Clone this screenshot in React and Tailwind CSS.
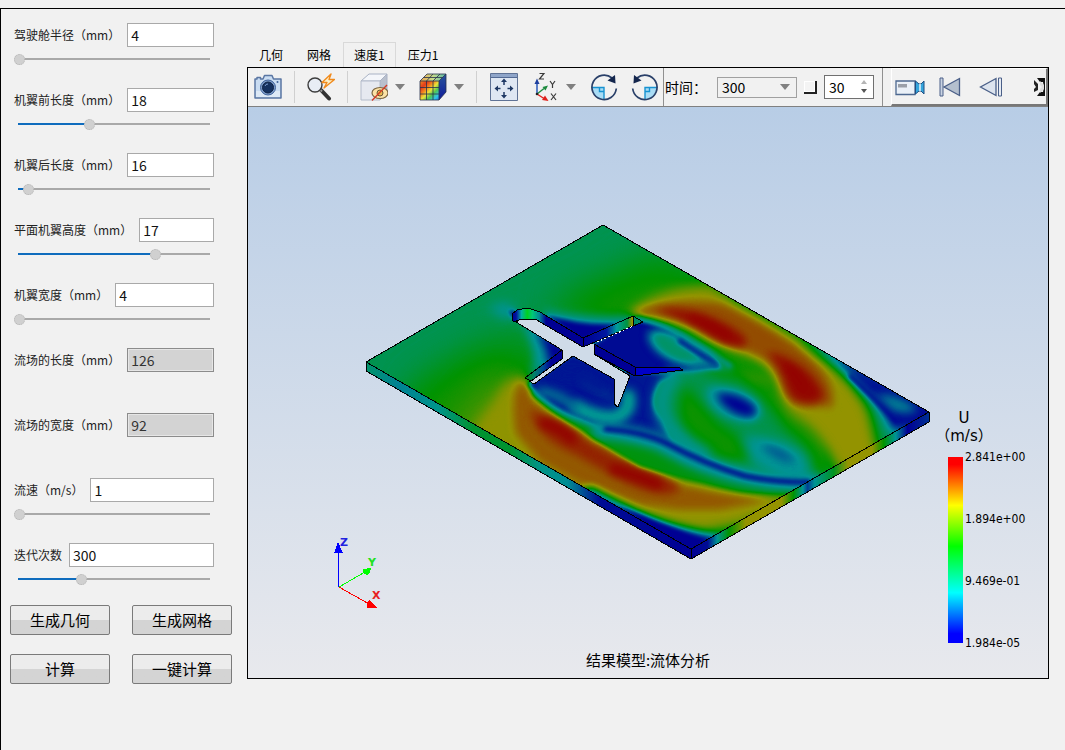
import React, { useState } from 'react'

const PARAMS = [
  { id: 'cockpit', label: '驾驶舱半径（mm）', value: '4', pos: 0 },
  { id: 'front', label: '机翼前长度（mm）', value: '18', pos: 37 },
  { id: 'rear', label: '机翼后长度（mm）', value: '16', pos: 5 },
  { id: 'height', label: '平面机翼高度（mm）', value: '17', pos: 72 },
  { id: 'width', label: '机翼宽度（mm）', value: '4', pos: 0 },
  { id: 'fieldLen', label: '流场的长度（mm）', value: '126', readOnly: true },
  { id: 'fieldWid', label: '流场的宽度（mm）', value: '92', readOnly: true },
  { id: 'speed', label: '流速（m/s）', value: '1', pos: 0 },
  { id: 'iter', label: '迭代次数', value: '300', pos: 33 },
]

const ACTIONS = ['生成几何', '生成网格', '计算', '一键计算']
const TABS = ['几何', '网格', '速度1', '压力1']
const LEGEND = ['2.841e+00', '1.894e+00', '9.469e-01', '1.984e-05']

const ParamRow = ({ param }) => {
  const [pos, setPos] = useState(param.pos || 0)
  return (
    <div className="h-11">
      <div className="flex items-center gap-[7px]">
        <label htmlFor={param.id} className="shrink-0 text-[12px] leading-6 text-[#222]">{param.label}</label>
        <input
          id={param.id}
          defaultValue={param.value}
          readOnly={param.readOnly}
          className="h-6 w-0 min-w-0 flex-1 border border-[#a9a9a9] bg-white px-[3px] text-[14px] leading-5 text-[#111] outline-none read-only:border-[#8c8c8c] read-only:bg-[#d3d3d3] read-only:text-[#333] read-only:inset-ring read-only:inset-ring-[#e6e6e6]"
        />
      </div>
      {param.readOnly ? null : (
        <div className="relative mt-1 h-4">
          <div className="absolute top-[7px] right-1 left-1 h-0.5 bg-[#a9a9a9]">
            <div className="h-full bg-[#0f6cbd]" style={{ width: `${pos}%` }} />
          </div>
          <input
            type="range"
            aria-label={param.label}
            value={pos}
            onChange={(e) => setPos(Number(e.target.value))}
            className="relative block h-4 w-full appearance-none bg-transparent outline-none [&::-webkit-slider-thumb]:size-[11px] [&::-webkit-slider-thumb]:appearance-none [&::-webkit-slider-thumb]:rounded-full [&::-webkit-slider-thumb]:border [&::-webkit-slider-thumb]:border-dotted [&::-webkit-slider-thumb]:border-[#b4b4b4] [&::-webkit-slider-thumb]:bg-[#d0d0d0]"
          />
        </div>
      )}
    </div>
  )
}

const Sep = () => <div className="h-8 w-px shrink-0 bg-[#d0d0d0]" />

const Caret = () => (
  <svg viewBox="0 0 10 6" className="h-1.5 w-2.5 shrink-0"><path d="M0 0H10L5 6Z" fill="#808080" /></svg>
)

const ToolButton = ({ label, children }) => (
  <button type="button" aria-label={label} className="size-7 shrink-0">
    <svg viewBox="0 0 28 28" className="size-7">{children}</svg>
  </button>
)

const CameraIcon = () => (
  <ToolButton label="截图">
    <path d="M1 6H3V4.500H6.500V6H9L10.500 2.500H18L19.500 6H27V25H1Z" fill="#c9dcf2" stroke="#5a76a3" strokeWidth="1.500" strokeLinejoin="round" />
    <path d="M2 18H26V24H2Z" fill="#e6eef8" opacity="0.700" />
    <circle cx="14" cy="14.500" r="7.500" fill="#7f9ecb" stroke="#3f6199" />
    <circle cx="14" cy="14.500" r="5.500" fill="#14305f" stroke="#0f2346" />
    <path d="M11 13a3 3 0 0 1 3-2" stroke="#7fa1d4" fill="none" />
    <circle cx="23.500" cy="9" r="1" fill="#3f6199" />
  </ToolButton>
)

const ZoomIcon = () => (
  <ToolButton label="缩放">
    <path d="M14 17L22 25.500" stroke="#333" strokeWidth="4" strokeLinecap="round" />
    <path d="M12.500 16L15 18.500" stroke="#999" strokeWidth="2" />
    <circle cx="8" cy="12" r="7" fill="#e8edf5" stroke="#3d3d3d" strokeWidth="1.400" />
    <path d="M24 1L15 9.500L20 9.500L17 15L27.500 6.500L22 6.500Z" fill="#fdf0c8" stroke="#f08a1d" strokeWidth="1.400" strokeLinejoin="round" />
  </ToolButton>
)

const HideCubeIcon = () => (
  <ToolButton label="隐藏">
    <path d="M1 8L9 1H27L20 8Z" fill="#f4f6fa" stroke="#a9b2c4" />
    <path d="M20 8L27 1V19L20 27Z" fill="#b9c0cd" stroke="#a9b2c4" />
    <path d="M1 8H20V27H1Z" fill="#e6e9f0" stroke="#b4bccb" />
    <ellipse cx="20" cy="20" rx="8" ry="5.500" fill="#fbe2a6" stroke="#7d6640" strokeWidth="1.200" />
    <circle cx="20" cy="20" r="3" fill="#e9b84f" stroke="#6b5636" />
    <path d="M12 27.500L27 12" stroke="#d33a24" strokeWidth="1.400" />
  </ToolButton>
)

const RainbowCubeIcon = () => (
  <ToolButton label="云图">
    <defs>
      <linearGradient id="cubeFront" x1="0" y1="0" x2="1" y2="1">
        <stop offset="0" stopColor="#f58a1e" /><stop offset="0.220" stopColor="#e23b1c" /><stop offset="0.380" stopColor="#f58a1e" />
        <stop offset="0.520" stopColor="#e9e33a" /><stop offset="0.680" stopColor="#4fc653" />
        <stop offset="0.850" stopColor="#2fc4e8" /><stop offset="1" stopColor="#1c7de8" />
      </linearGradient>
      <linearGradient id="cubeTop" x1="0" x2="1">
        <stop offset="0" stopColor="#f0a24a" /><stop offset="0.500" stopColor="#c6dc8a" /><stop offset="1" stopColor="#55b5a8" />
      </linearGradient>
      <linearGradient id="cubeSide" x1="0" y1="0" x2="0" y2="1">
        <stop offset="0" stopColor="#29559c" /><stop offset="1" stopColor="#101b9a" />
      </linearGradient>
    </defs>
    <path d="M1 8L8 1H27L20 8Z" fill="url(#cubeTop)" />
    <path d="M20 8L27 1V19L20 27Z" fill="url(#cubeSide)" />
    <path d="M1 8H20V27H1Z" fill="url(#cubeFront)" />
    <path d="M1 8H20V27H1ZM1 8L8 1H27L20 8M27 1V19L20 27M7.500 8V27M14 8V27M1 14.500H20M1 21H20M7.500 8L14 1M14 8L21 1M4.500 4.500H23.500" fill="none" stroke="#27304d" strokeWidth="0.800" />
  </ToolButton>
)

const FitIcon = () => (
  <ToolButton label="适应窗口">
    <path d="M0.500 0.500H27.500V27.500H0.500Z" fill="#dfe7f3" stroke="#5f7295" />
    <path d="M1 1H27V4H1Z" fill="#8fa5c9" />
    <path d="M1 4.500H27" stroke="#536a94" />
    <path d="M14 12V8M14 19V23M10.500 15.500H7M17.500 15.500H21" stroke="#1f3864" strokeWidth="1.500" />
    <path d="M14 5.500L17 9H11ZM14 25.500L17 22H11ZM4.500 15.500L8 12.500V18.500ZM23.500 15.500L20 12.500V18.500Z" fill="#1f3864" />
  </ToolButton>
)

const AxesIcon = () => (
  <ToolButton label="视图方向">
    <path d="M3 21V10" stroke="#1d4fb5" strokeWidth="1.400" /><path d="M3 5.500L5.500 11H0.500Z" fill="#1d3f9e" />
    <path d="M3 21L10 15.500" stroke="#1b8a3d" strokeWidth="1.400" /><path d="M14 12.500L11.500 17.500L8.500 14Z" fill="#1b8a3d" />
    <path d="M3 21L10 25.500" stroke="#e0201b" strokeWidth="1.400" /><path d="M14.500 28L8 27L11 22.500Z" fill="#e0201b" />
    <circle cx="3" cy="21" r="1.300" fill="#222" />
    <path d="M5.500 0.500H10L5.500 6H10M16 8L18.500 11.500L21 8M18.500 11.500V15M17 20.500L22 27M22 20.500L17 27" fill="none" stroke="#3b3b3b" strokeWidth="1.200" />
  </ToolButton>
)

const RotateIcon = ({ label, mirrored }) => (
  <ToolButton label={label}>
    <g transform={mirrored ? 'matrix(-1 0 0 1 28 0)' : undefined}>
      <path d="M2 14.500H14V27A12 12 0 0 1 2 14.500Z" fill="#a9dcf5" />
      <path d="M2 14.500H14V27M9.500 14.500V18.500H14" fill="none" stroke="#1792d1" strokeWidth="1.400" />
      <path d="M22 5A12.200 12.200 0 1 0 26.300 15.500" fill="none" stroke="#2a4069" strokeWidth="1.700" />
      <path d="M17.500 7.500L25.500 10.500L25 2Z" fill="#14264d" />
    </g>
  </ToolButton>
)

const Toolbar = () => (
  <div className="flex h-[39px] items-center overflow-hidden border-b border-[#808080] bg-[#f1f1f1] pl-1.5">
    <div className="flex shrink-0 items-center gap-3">
      <CameraIcon />
      <Sep />
      <ZoomIcon />
      <Sep />
    </div>
    <div className="ml-3 flex shrink-0 items-center gap-[7px]">
      <HideCubeIcon />
      <Caret />
    </div>
    <div className="mr-3 ml-3.5 flex shrink-0 items-center gap-[7px]">
      <RainbowCubeIcon />
      <Caret />
    </div>
    <Sep />
    <div className="ml-[13px] flex shrink-0 items-center gap-4">
      <FitIcon />
      <div className="flex items-center gap-1">
        <AxesIcon />
        <Caret />
      </div>
    </div>
    <div className="mr-1 ml-3.5 flex shrink-0 items-center gap-[13px]">
      <RotateIcon label="顺时针旋转" />
      <RotateIcon label="逆时针旋转" mirrored />
    </div>
    <div className="flex h-[38px] shrink-0 items-center border-x border-[#909090] pr-2 pl-px">
      <label htmlFor="time" className="w-[52px] text-[14px] leading-5">时间：</label>
      <div className="relative">
        <select id="time" defaultValue="300" className="block h-[21px] w-20 appearance-none border border-[#a0a0a0] bg-[#f1f1f1] pl-1 text-[14px] leading-[19px]">
          <option>300</option>
          <option>200</option>
          <option>100</option>
        </select>
        <div className="pointer-events-none absolute top-[7px] right-[7px]"><Caret /></div>
      </div>
      <input type="checkbox" aria-label="循环" className="ml-[7px] size-[13px] appearance-none border-r-2 border-b-2 border-[#222] bg-[#f4f4f4] inset-ring inset-ring-white" />
      <div className="relative ml-[7px]">
        <input aria-label="帧率" defaultValue="30" className="block h-6 w-[50px] border border-[#707070] bg-white pl-1 text-[14px] leading-5 outline-none" />
        <svg viewBox="0 0 6 14" className="pointer-events-none absolute top-[5px] right-[7px] h-3.5 w-1.5">
          <path d="M0 4L3 0L6 4Z" fill="#b5b5b5" /><path d="M0 9L3 13L6 9Z" fill="#555" />
        </svg>
      </div>
    </div>
    <div className="ml-2 flex h-[38px] min-w-0 flex-1 items-center gap-3.5 overflow-hidden border-t border-r-2 border-b-2 border-l border-t-white border-r-[#777] border-b-[#777] border-l-white pl-[3px]">
      <button type="button" aria-label="录制" className="shrink-0">
        <svg viewBox="0 0 30 18" className="h-[18px] w-[30px]">
          <path d="M1 3H20V16.500H1Z" fill="#eaf0f7" stroke="#4d6890" strokeWidth="1.300" />
          <path d="M3 6H12V9.500H3Z" fill="#9a9fa8" />
          <path d="M20.500 3L24 6H26L29 3V16L26 13H24L20.500 16Z" fill="#35a5dc" stroke="#1f4f83" />
          <path d="M25 6V13" stroke="#eaf6fd" strokeWidth="1.500" />
        </svg>
      </button>
      <button type="button" aria-label="第一帧" className="shrink-0">
        <svg viewBox="0 0 22 20" className="h-5 w-[22px]">
          <path d="M20.500 1.500V18.500L5 10Z" fill="#b4bfce" stroke="#4a5f88" strokeWidth="1.300" />
          <path d="M1 1H4V19H1Z" fill="#c9d3e2" stroke="#4a5f88" />
        </svg>
      </button>
      <button type="button" aria-label="上一帧" className="ml-1 shrink-0">
        <svg viewBox="0 0 24 20" className="h-5 w-6">
          <path d="M17 1.500V18.500L1.500 10Z" fill="#dde4ee" stroke="#4a5f88" strokeWidth="1.300" />
          <path d="M19.500 1H22.500V19H19.500Z" fill="#e6ebf3" stroke="#4a5f88" />
        </svg>
      </button>
      <button type="button" aria-label="更多" className="mr-px ml-auto shrink-0">
        <svg viewBox="0 0 11 18" className="h-[18px] w-[11px]">
          <path d="M3 0H11V18H3L6 14H9L10 9L9 4H6Z" fill="#111" />
          <path d="M0 2L4 6V12L0 14V11L2 9L0 6Z" fill="#222" />
          <path d="M6 3L10 7V11L6 15V11L8 9L6 7Z" fill="#ddd" />
        </svg>
      </button>
    </div>
  </div>
)

// Scalar field of the velocity magnitude. Every shape is [path, level 0..1, blur];
// the colour map filter turns the grey level into blue-cyan-green-yellow-red.
// Streaks have no fill level but a stroke level and a width.
const FIELD = [
  // free stream
  ['M410 390L500 335L600 290L650 250L840 350L560 500Z', 0.43, 'b3'],
  ['M440 470L395 405Q450 360 500 345L545 372L560 460ZM550 305Q610 275 670 262L850 360L620 340Z', 0.53, 'b3'],
  ['M450 440L485 395L510 380L560 470L520 480Z', 0.68, 'b3'],
  // wake
  ['M640 320L700 335L790 400L840 460L830 500L690 500L590 440L530 385L560 350Z', 0.38, 'b2'],
  ['M725 350Q765 360 780 392Q800 412 826 440L830 480L816 485Q814 450 785 430Q768 400 738 380Q700 374 700 362Z', 0.52, 'b2'],
  ['M684 385Q700 400 720 424Q750 440 752 460Q725 466 700 450Q668 425 684 385Z', 0.52, 'b2'],
  ['M742 372Q758 372 772 384Q760 384 742 372Z', 0.62, 'bm'],
  // upper jet
  ['M627 314C640 300 672 285 712 286L740 306L796 338C835 362 862 388 870 415L880 458L838 474C828 446 812 428 794 417C776 402 780 378 758 362C738 352 718 348 702 338C680 322 660 316 634 317Z', 0.75, 'b2'],
  ['M634 312C655 302 690 299 722 304C755 318 790 340 806 354C828 372 836 390 832 408C822 404 806 410 792 403C778 394 784 376 766 361C750 350 728 346 712 337C690 321 665 315 634 315Z', 0.87, 'bm'],
  ['M655 310C680 306 712 314 736 330C750 340 750 348 736 347C718 343 706 334 694 327C682 320 670 315 655 310ZM766 352C790 354 818 374 824 396C818 406 802 404 794 399C784 390 786 370 766 352Z', 0.99, 'bm'],
  ['M692 317Q714 324 728 338M788 368Q800 378 804 390', null, 'bm', 1, 6],
  // lower jet
  ['M523 378C508 372 500 390 492 404L462 444L600 520L705 532L745 525L800 500L792 492C750 494 722 488 700 480C660 476 630 462 606 444C570 428 536 408 526 378Z', 0.74, 'b2'],
  ['M522 380C512 388 512 412 516 434L540 462L580 484L640 505L680 510L720 510L775 500C735 496 705 490 680 484C650 474 618 460 596 440C560 425 532 405 523 380Z', 0.85, 'bm'],
  ['M530 410C548 416 566 422 582 436C596 450 640 466 670 480C690 490 674 498 650 492C624 486 596 464 570 452C548 442 534 428 530 410Z', 0.94, 'bm'],
  ['M544 423Q560 427 572 439M614 469Q636 475 658 484', null, 'bm', 1, 10],
  // green shear layer between the lower jet and the wake
  ['M532 384Q536 405 580 427Q606 446 640 466Q690 480 740 491Q780 494 806 490Q770 490 735 480Q700 470 652 444Q600 430 560 408Z', 0.48, 'b1'],
  // corner regions
  ['M590 488C630 510 670 528 718 537L705 570L570 500Z', 0.02, 'bm'],
  ['M618 505C650 518 680 532 706 540L690 556Z', 0, 'b1'],
  ['M800 338C835 362 848 372 862 390Q880 402 892 432L960 430L930 400Z', 0.02, 'b2'],
  ['M876 394Q900 394 918 410Q905 416 892 410Z', 0.22, 'bm'],
  ['M850 376Q872 396 896 422', null, 'b1', 0, 4],
  // boundary layer on the long edges
  ['M602 220L700 276L930 408L936 400L608 212Z', 0.12, 'b1'],
  ['M362 367L600 502L691 553L680 562L350 371Z', 0.14, 'b1'],
  // stagnation point at the nose
  ['M488 308Q506 298 516 308L511 320Q500 318 488 308Z', 0.24, 'b2'],
  ['M509 310L516 311L513 320Z', 0, 'b1'],
  // pockets in front of the wings
  ['M518 318Q532 342 533 356Q536 368 526 378L566 356L566 345Z', 0.25, 'bm'],
  ['M534 330Q550 348 548 368L566 356L566 345Z', 0, 'bm'],
  ['M540 308Q580 319 634 316L632 326L580 345Z', 0.25, 'bm'],
  ['M544 314Q580 326 618 324L582 342Z', 0, 'b1'],
  // wake of the upper wing
  ['M634 318Q668 325 690 342Q712 352 722 368L690 371L630 374L590 346Z', 0.02, 'b1'],
  // recirculation behind the lower wing and the tail
  ['M528 384Q550 410 580 419Q610 432 632 433Q655 444 672 446L662 420Q645 404 660 382L676 374L620 372L572 354Z', 0.04, 'b1'],
  ['M674 376Q656 394 664 418Q674 438 704 454', null, 'b2', 0.26, 14],
  ['M638 318Q670 325 697 345Q716 356 730 366', null, 'b1', 0.26, 4],
  // vortex rings and streaks
  ['M648 334Q650 352 676 362Q700 368 716 362Q692 338 668 332Q652 328 648 334Z', 0.3, 'bm'],
  ['M660 338Q668 352 692 360', null, 'bm', 0.36, 5],
  ['M680 341Q700 354 716 365', null, 'b1', 0.04, 5],
  ['M686 371Q705 364 730 368', null, 'bm', 0.26, 5],
  ['M578 408Q595 418 614 418Q632 412 628 396', null, 'bm', 0.28, 14],
  ['M540 392Q556 392 576 408', null, 'bm', 0.2, 9],
  ['M582 378Q596 390 612 398', null, 'bm', 0.12, 4],
  ['M560 376Q580 370 600 386', null, 'bm', 0.04, 9],
  ['M534 392Q560 416 600 428Q630 436 650 442', null, 'b1', 0.24, 3],
  ['M708 386Q735 384 756 400Q768 418 752 422Q726 422 712 408Q702 396 708 386Z', 0.25, 'bm'],
  ['M716 393Q742 392 756 408Q758 417 746 417Q724 412 716 393Z', 0, 'bm'],
  ['M742 436Q775 434 804 454Q814 472 802 484Q778 480 752 462Z', 0.25, 'b2'],
  ['M760 444Q784 446 796 462Q778 464 760 444Z', 0.14, 'bm'],
  // slow streak that trails off the tail
  ['M600 430Q650 436 668 447Q705 468 745 477Q780 485 816 482', null, 'bm', 0.24, 17],
  ['M606 429Q645 432 668 444Q705 464 745 476Q780 483 808 482', null, 'b1', 0.02, 5],
]

const FILTERS = { b1: 'url(#b1)', bm: 'url(#bm)', b2: 'url(#b2)', b3: 'url(#b3)' }
const BLURS = [['b1', 2], ['bm', 4], ['b2', 6], ['b3', 18]]

const grey = (v) => {
  const n = Math.max(0, Math.min(255, Math.round(v * 255)))
  return `rgb(${n},${n},${n})`
}

const VelocityPlot = () => (
  <svg viewBox="248 107 800 571" className="block h-auto w-full" role="img" aria-label="速度云图">
    <defs>
      <clipPath id="slabTop"><path d="M366 362L603 225L929 412L691 549Z" /></clipPath>
      {BLURS.map(([id, deviation]) => (
        <filter key={id} id={id} filterUnits="userSpaceOnUse" x="248" y="107" width="800" height="571" colorInterpolationFilters="sRGB">
          <feGaussianBlur stdDeviation={deviation} />
        </filter>
      ))}
      <filter id="colormap" filterUnits="userSpaceOnUse" x="248" y="107" width="800" height="571" colorInterpolationFilters="sRGB">
        <feComponentTransfer>
          <feFuncR type="table" tableValues="0 0 0 0.58 0.58" />
          <feFuncG type="table" tableValues="0 0.58 0.58 0.58 0" />
          <feFuncB type="table" tableValues="0.58 0.58 0 0 0" />
        </feComponentTransfer>
      </filter>
      <linearGradient id="leftFace" gradientUnits="userSpaceOnUse" x1="366" y1="0" x2="691" y2="0">
        <stop offset="0" stopColor="#00946a" /><stop offset="0.100" stopColor="#008294" /><stop offset="0.220" stopColor="#00948c" />
        <stop offset="0.330" stopColor="#009430" /><stop offset="0.440" stopColor="#009430" /><stop offset="0.530" stopColor="#009484" />
        <stop offset="0.620" stopColor="#008c94" /><stop offset="0.720" stopColor="#000c94" /><stop offset="1" stopColor="#000094" />
      </linearGradient>
      <linearGradient id="rightFace" gradientUnits="userSpaceOnUse" x1="691" y1="0" x2="929" y2="0">
        <stop offset="0" stopColor="#000094" /><stop offset="0.070" stopColor="#000c94" /><stop offset="0.110" stopColor="#009494" />
        <stop offset="0.160" stopColor="#009400" /><stop offset="0.230" stopColor="#949400" /><stop offset="0.380" stopColor="#949400" />
        <stop offset="0.430" stopColor="#009400" /><stop offset="0.470" stopColor="#009494" /><stop offset="0.490" stopColor="#004094" />
        <stop offset="0.520" stopColor="#009494" /><stop offset="0.600" stopColor="#009420" /><stop offset="0.660" stopColor="#949400" />
        <stop offset="0.760" stopColor="#949400" /><stop offset="0.810" stopColor="#009400" /><stop offset="0.860" stopColor="#009494" />
        <stop offset="0.910" stopColor="#000094" /><stop offset="1" stopColor="#003094" />
      </linearGradient>
      <linearGradient id="noseWall" gradientUnits="userSpaceOnUse" x1="512" y1="0" x2="546" y2="0">
        <stop offset="0" stopColor="#000094" /><stop offset="0.120" stopColor="#0010a0" /><stop offset="0.280" stopColor="#00b4a0" />
        <stop offset="0.450" stopColor="#00d020" /><stop offset="0.600" stopColor="#00c878" /><stop offset="0.800" stopColor="#008c94" /><stop offset="1" stopColor="#000094" />
      </linearGradient>
      <linearGradient id="wingWall" gradientUnits="userSpaceOnUse" x1="583" y1="0" x2="635" y2="0">
        <stop offset="0" stopColor="#000094" /><stop offset="0.450" stopColor="#0018a0" /><stop offset="0.650" stopColor="#009c9c" />
        <stop offset="0.850" stopColor="#009440" /><stop offset="0.950" stopColor="#a09400" /><stop offset="1" stopColor="#949400" />
      </linearGradient>
      <linearGradient id="rearWall" gradientUnits="userSpaceOnUse" x1="525" y1="0" x2="562" y2="0">
        <stop offset="0" stopColor="#009400" /><stop offset="0.250" stopColor="#00806a" /><stop offset="0.500" stopColor="#004c94" /><stop offset="0.700" stopColor="#000094" />
      </linearGradient>
    </defs>

    <g clipPath="url(#slabTop)">
      <g filter="url(#colormap)">
        <rect x="248" y="107" width="800" height="571" fill={grey(0.37)} />
        {FIELD.map(([d, level, blur, strokeLevel, width]) => (
          <path
            key={d}
            d={d}
            fill={level === null ? 'none' : grey(level)}
            stroke={level === null ? grey(strokeLevel) : 'none'}
            strokeWidth={width}
            strokeLinecap="round"
            filter={FILTERS[blur]}
          />
        ))}
      </g>
    </g>

    <g stroke="#000" strokeWidth="1" strokeLinejoin="round" shapeRendering="crispEdges">
      <path d="M366 362L691 549V559L366 371Z" fill="url(#leftFace)" />
      <path d="M691 549L929 412V422L691 559Z" fill="url(#rightFace)" />
      <path d="M366 362L603 225L929 412" fill="none" />
    </g>

    {/* cut-out of the aircraft */}
    <g stroke="#000" strokeWidth="1" strokeLinejoin="round" shapeRendering="crispEdges">
      <path d="M516 322L521 319H535L583 347L594 344V354L630 376L618 407L614 404V379L573 356L534 384L529 381L562 359V350Z" fill="#cfdbe8" />
      <path d="M583 347L594 344" stroke="#cfdbe8" />
      <path d="M514 322L512 320V314L517 310L528 308L540 312L583 338V347L535 319H521Z" fill="url(#noseWall)" />
      <path d="M583 338L633 316V326L583 347Z" fill="url(#wingWall)" />
      <path d="M633 316L643 322L633 326Z" fill="#008a68" />
      <path d="M594 344L635 367V376L594 354Z" fill="#000094" />
      <path d="M635 367H678L683 370L635 376Z" fill="#0000c8" />
      <path d="M525 378L562 350V359L531 381Z" fill="url(#rearWall)" />
      <path d="M597 342L633 326" stroke="#fff" strokeDasharray="2 2" />
    </g>

    {/* orientation triad */}
    <g shapeRendering="crispEdges">
      <path d="M338.500 587V552" stroke="#00f" />
      <path d="M338 542L343 553H334Z" fill="#00f" />
      <path d="M339 587L365 572" stroke="#0f0" />
      <path d="M371 568L363 569V573L367 575L370 573Z" fill="#0f0" />
      <path d="M339 587L369 604" stroke="#f00" />
      <path d="M370 600L377 608L367 608V602Z" fill="#f00" />
    </g>
    <g fontFamily="'DejaVu Sans', sans-serif" fontSize="11" fontWeight="bold">
      <text x="340" y="546" fill="#2222e0">Z</text>
      <text x="368" y="566" fill="#22e022">Y</text>
      <text x="372" y="599" fill="#e82020">X</text>
    </g>
  </svg>
)

const Legend = () => (
  <div className="absolute right-[17px] bottom-[27px] w-[83px]">
    <div className="-ml-5 w-[72px] text-center font-['DejaVu_Sans','Noto_Sans_CJK_SC',sans-serif] text-[15px] leading-[18px]">
      <div>U</div>
      <div className="whitespace-nowrap">（m/s）</div>
    </div>
    <div className="mt-1 flex items-center gap-0.5">
      <div className="h-[186px] w-[15px] bg-[linear-gradient(to_bottom,#f00_4%,#ff0_26%,#0f0_48%,#0ff_73%,#00f_95%)]" />
      <ul className="flex h-[202px] flex-col justify-between font-['DejaVu_Sans_Condensed','Noto_Sans',sans-serif] text-[12px] leading-4">
        {LEGEND.map((v) => <li key={v}>{v}</li>)}
      </ul>
    </div>
  </div>
)

const ResultPanel = () => {
  const [active, setActive] = useState('速度1')
  return (
    <main className="mr-4 min-w-0 flex-1 pt-[33px]">
      <div role="tablist" className="flex h-[25px] text-[12px] leading-6">
        {TABS.map((tab) => (
          <button
            key={tab}
            type="button"
            role="tab"
            aria-selected={tab === active}
            onClick={() => setActive(tab)}
            className="border-[#d9d9d9] px-3 aria-selected:border aria-selected:border-b-0 aria-selected:px-2.5"
          >
            {tab}
          </button>
        ))}
      </div>
      <section className="border border-black">
        <Toolbar />
        <div className="relative bg-linear-to-b from-[#b8cde6] to-[#e8e9ed]">
          <VelocityPlot />
          <Legend />
          <p className="absolute inset-x-0 bottom-1.5 text-center text-[15px] leading-6">结果模型:流体分析</p>
        </div>
      </section>
    </main>
  )
}

export default function App() {
  return (
    <div className="min-h-screen bg-[#f1f1f1] pt-2 font-['Noto_Sans_CJK_SC',sans-serif] text-black">
      <div className="flex min-h-[calc(100vh-8px)] border-t border-l border-black">
        <aside className="w-[246px] shrink-0 pt-3.5">
          <form className="flex flex-col gap-[21px] pr-[33px] pl-[13px]">
            {PARAMS.map((p) => <ParamRow key={p.id} param={p} />)}
          </form>
          <div className="mt-[18px] grid grid-cols-2 gap-x-[22px] gap-y-[19px] pr-[15px] pl-[9px]">
            {ACTIONS.map((a) => (
              <button key={a} type="button" className="h-[30px] rounded-xs border border-[#7a7a7a] bg-linear-to-b from-[#ececec] from-50% to-[#d4d4d4] to-50% text-[15px] leading-7">{a}</button>
            ))}
          </div>
        </aside>
        <ResultPanel />
      </div>
    </div>
  )
}
